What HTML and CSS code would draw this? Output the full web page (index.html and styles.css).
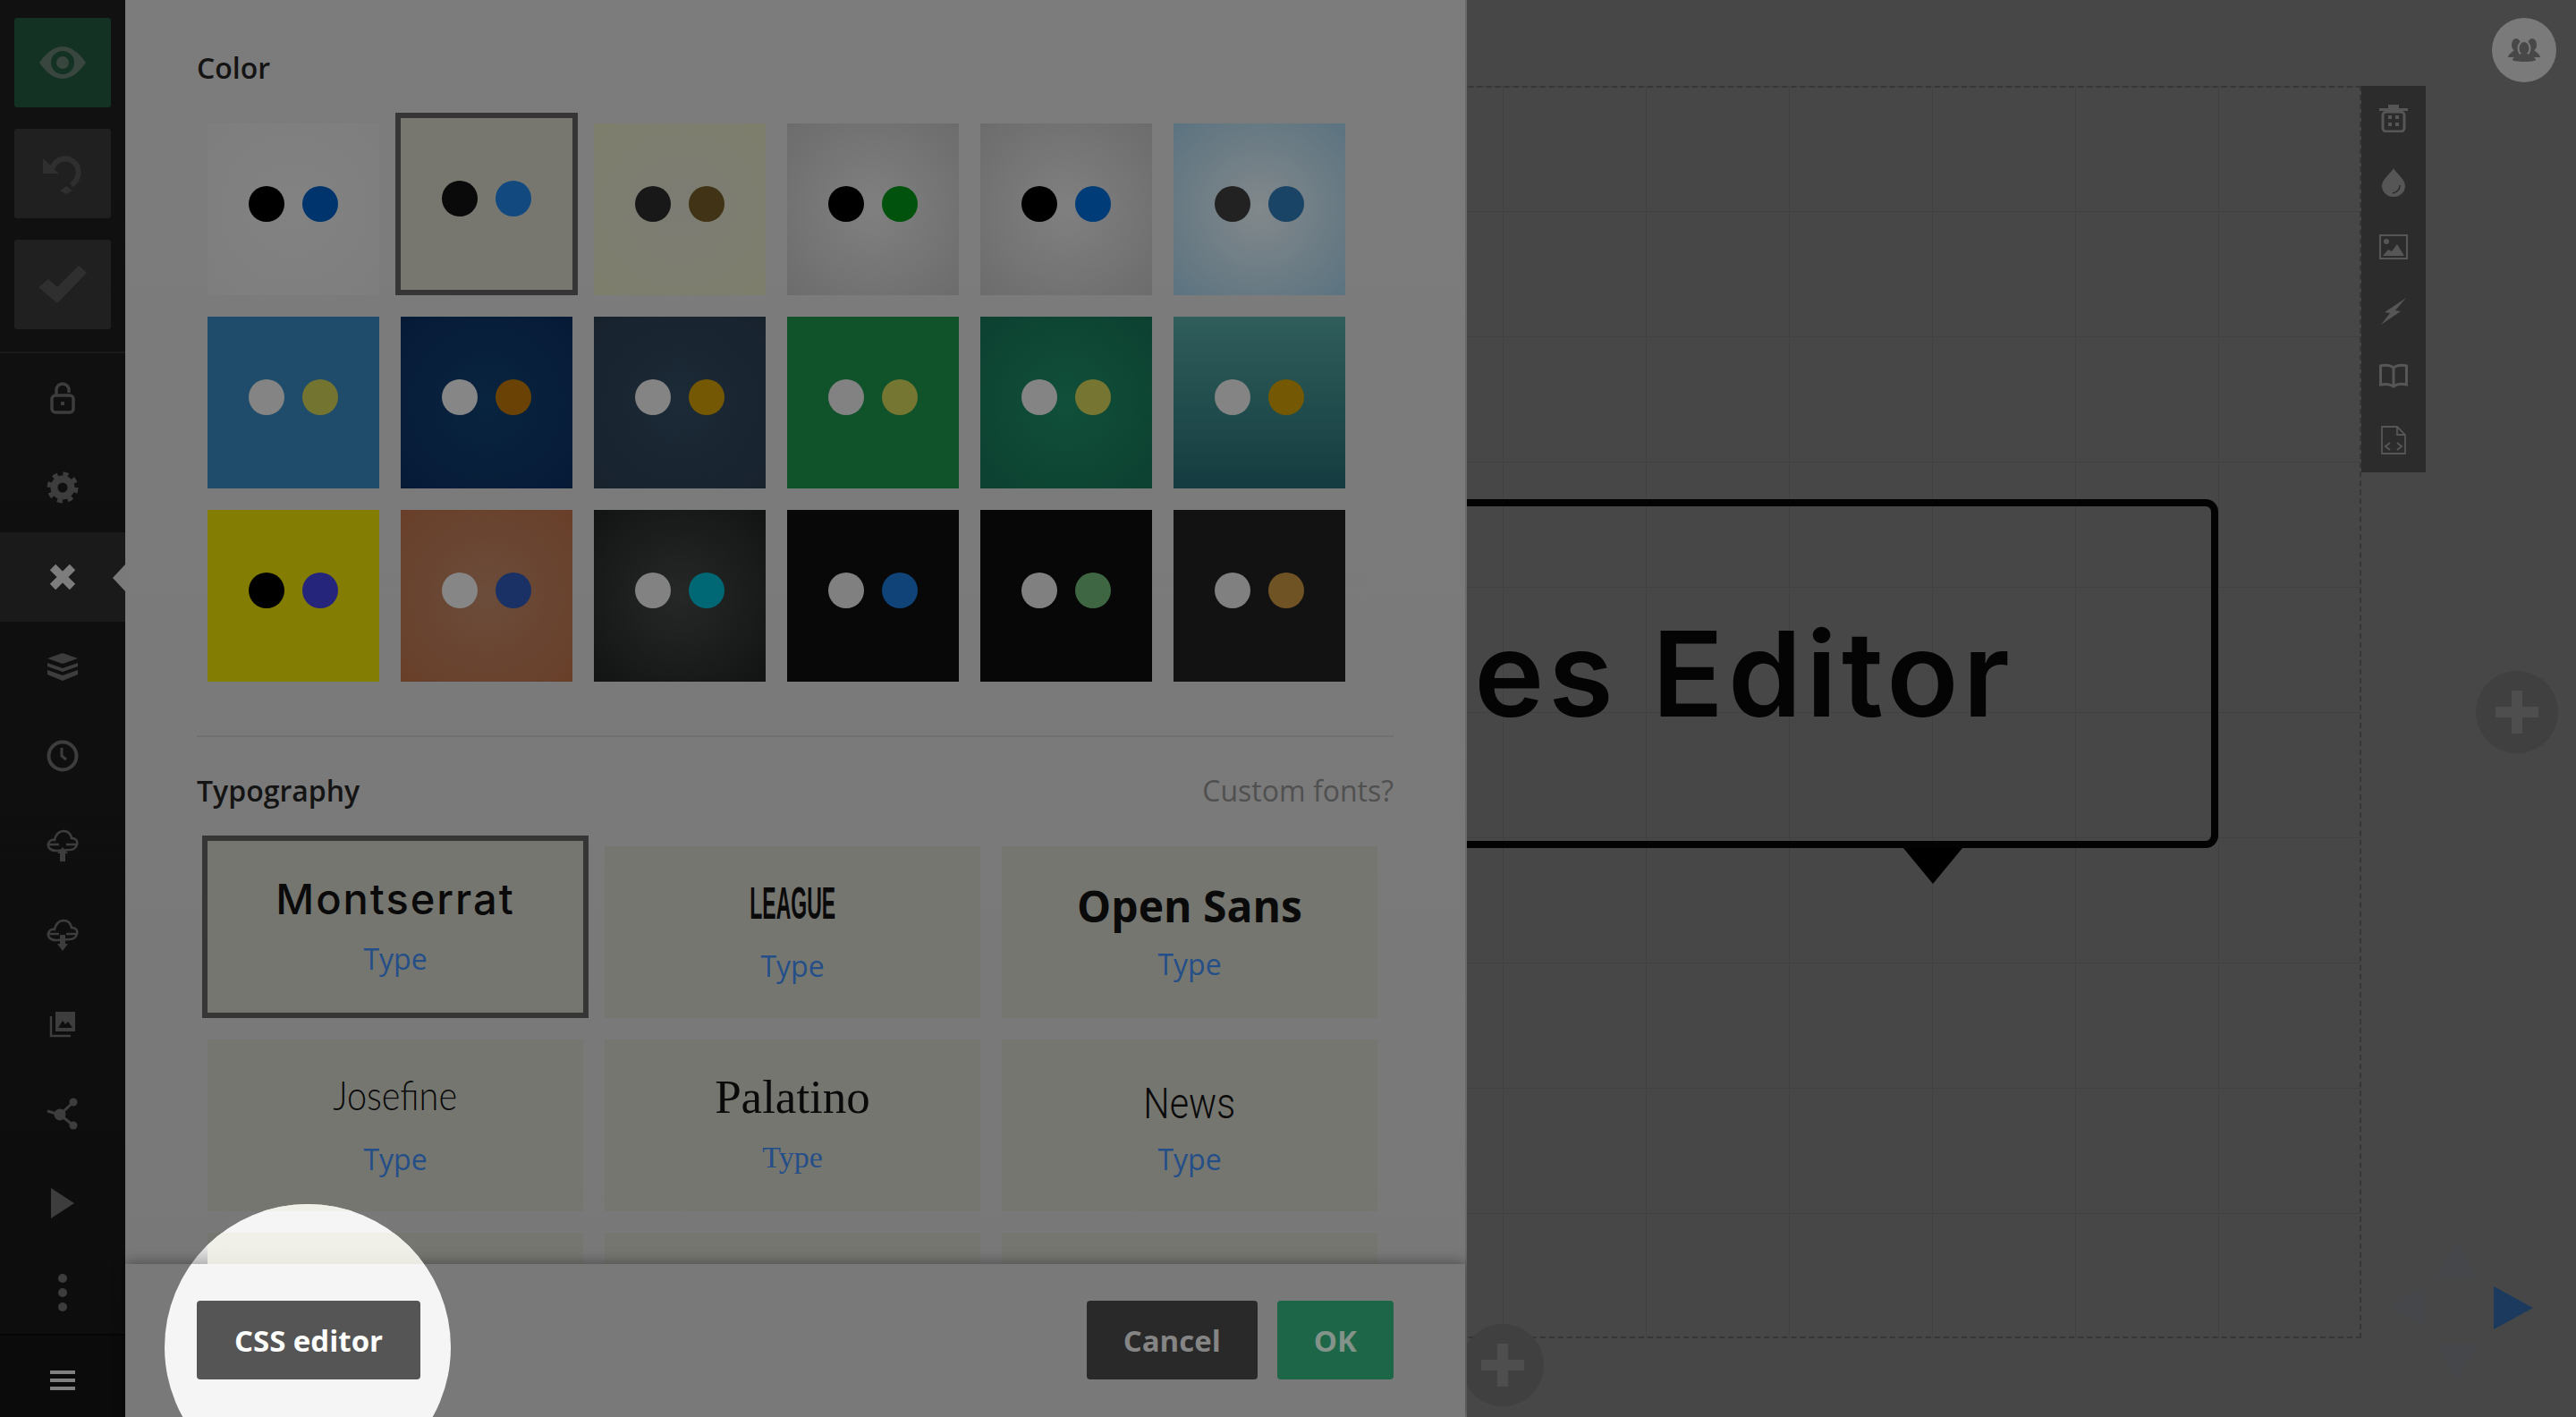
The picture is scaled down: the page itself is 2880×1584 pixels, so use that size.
FILE: index.html
```html
<!DOCTYPE html>
<html lang="en">
<head>
    <meta charset="UTF-8">
    <title>Slides Editor</title>
    <link rel="stylesheet" href="styles.css">
</head>
<body>

<div class="app">

    <nav class="sidebar">
        <div class="primary-actions">
            <button class="action action-preview">
                <svg width="52" height="38" viewBox="0 0 52 38"><path class="ic" d="M0 19C9 6 18 1 26 1s17 5 26 18c-9 13-18 18-26 18S9 32 0 19z"/><circle cx="26" cy="19" r="13" fill="#133223"/><circle class="ic" cx="26" cy="19" r="7"/></svg>
            </button>
            <button class="action">
                <svg width="46" height="46" viewBox="0 0 46 46"><path class="ic-line" d="M11 18C15 6 27 4 34 9c9 6 9 19-1 27" stroke-width="6"/><path class="ic" d="M1 6v17h18z"/><path class="ic" d="M27 37l7 5-7 4-7-4z"/></svg>
            </button>
            <button class="action">
                <svg width="54" height="42" viewBox="0 0 54 42"><path class="ic" d="M0 24l11-9 10 9L45 0l9 8-33 34z"/></svg>
            </button>
        </div>

        <div class="side-list">
            <a class="side-row">
                <svg width="28" height="36" viewBox="0 0 28 36"><rect class="ic-line" x="2" y="15" width="24" height="19" rx="4" stroke-width="3.5"/><path class="ic-line" d="M7 14V9a7 7 0 0 1 14 0v3" stroke-width="3.5"/><rect class="ic" x="12" y="22" width="4" height="4"/></svg>
            </a>
            <a class="side-row">
                <svg width="36" height="36" viewBox="0 0 36 36"><circle class="ic-line" cx="18" cy="18" r="9.5" stroke-width="8"/><circle class="ic-line" cx="18" cy="18" r="15" stroke-width="5" stroke-dasharray="5.89 5.89"/></svg>
            </a>
            <a class="side-row side-row-active">
                <svg width="30" height="30" viewBox="0 0 30 30"><path d="M4 4l22 22M26 4L4 26" fill="none" stroke="#7d7d7d" stroke-width="9"/></svg>
            </a>
            <a class="side-row">
                <svg width="34" height="31" viewBox="0 0 34 31"><path class="ic" d="M17 0l17 6-17 6L0 6zM0 11l17 6 17-6v4l-17 6-17-6zM0 19l17 6 17-6v5l-17 7-17-7z"/></svg>
            </a>
            <a class="side-row">
                <svg width="36" height="36" viewBox="0 0 36 36"><circle class="ic-line" cx="18" cy="18" r="15.5" stroke-width="4"/><path class="ic-line" d="M17 9v9l5 4" stroke-width="3"/></svg>
            </a>
            <a class="side-row">
                <svg width="36" height="36" viewBox="0 0 36 36"><path class="ic-line" d="M11 24C4 24 1 20 2 16c1-3 4-5 7-4 1-6 5-10 10-10s8 3 9 8c5 0 7 3 6 7-1 4-4 6-8 6zM2 17h12M22 17h12" stroke-width="2.6"/><path class="ic" d="M18 20l6 7h-3v9h-6v-9h-3z"/></svg>
            </a>
            <a class="side-row">
                <svg width="36" height="36" viewBox="0 0 36 36"><path class="ic-line" d="M11 24C4 24 1 20 2 16c1-3 4-5 7-4 1-6 5-10 10-10s8 3 9 8c5 0 7 3 6 7-1 4-4 6-8 6zM2 17h12M22 17h12" stroke-width="2.6"/><path class="ic" d="M15 18h6v10h3l-6 8-6-8h3z"/></svg>
            </a>
            <a class="side-row">
                <svg width="30" height="30" viewBox="0 0 30 30"><path class="ic-line" d="M2 6v22h22" stroke-width="2.5"/><path class="ic" fill-rule="evenodd" d="M7 1h22v22H7zM10 19h16l-5-7-3 3-3-4z"/></svg>
            </a>
            <a class="side-row">
                <svg width="36" height="36" viewBox="0 0 36 36"><path class="ic-line" d="M1 15l14 4 15-14M15 19l15 12" stroke-width="3"/><circle class="ic" cx="15" cy="19" r="6.5"/><circle class="ic" cx="30" cy="5" r="4.5"/><circle class="ic" cx="30" cy="31" r="4.5"/></svg>
            </a>
            <a class="side-row">
                <svg width="26" height="34" viewBox="0 0 26 34"><path class="ic" d="M0 0l26 17L0 34z"/></svg>
            </a>
            <a class="side-row">
                <svg width="12" height="44" viewBox="0 0 12 44"><circle class="ic" cx="6" cy="6" r="5"/><circle class="ic" cx="6" cy="22" r="5"/><circle class="ic" cx="6" cy="38" r="5"/></svg>
            </a>
        </div>

        <div class="side-footer">
            <svg width="28" height="22" viewBox="0 0 28 22"><path d="M0 0h28v4H0zM0 9h28v4H0zM0 18h28v4H0z" fill="#808080"/></svg>
        </div>
    </nav>

    <section class="panel">
        <div class="panel-scroll">
            <h2 class="section-label">Color</h2>
            <div class="swatches">
                <div class="swatch s1"><i></i><i></i></div>
                <div class="swatch s2 selected"><i></i><i></i></div>
                <div class="swatch s3"><i></i><i></i></div>
                <div class="swatch s4"><i></i><i></i></div>
                <div class="swatch s5"><i></i><i></i></div>
                <div class="swatch s6"><i></i><i></i></div>
                <div class="swatch s7"><i></i><i></i></div>
                <div class="swatch s8"><i></i><i></i></div>
                <div class="swatch s9"><i></i><i></i></div>
                <div class="swatch s10"><i></i><i></i></div>
                <div class="swatch s11"><i></i><i></i></div>
                <div class="swatch s12"><i></i><i></i></div>
                <div class="swatch s13"><i></i><i></i></div>
                <div class="swatch s14"><i></i><i></i></div>
                <div class="swatch s15"><i></i><i></i></div>
                <div class="swatch s16"><i></i><i></i></div>
                <div class="swatch s17"><i></i><i></i></div>
                <div class="swatch s18"><i></i><i></i></div>
            </div>

            <hr class="divider">

            <div class="type-head">
                <h2 class="section-label">Typography</h2>
                <a class="custom-link">Custom fonts?</a>
            </div>
            <div class="fonts">
                <div class="font-tile font-montserrat selected"><span class="font-name">Montserrat</span><span class="font-type">Type</span></div>
                <div class="font-tile font-league"><span class="font-name">LEAGUE</span><span class="font-type">Type</span></div>
                <div class="font-tile font-opensans"><span class="font-name">Open Sans</span><span class="font-type">Type</span></div>
                <div class="font-tile font-josefine"><span class="font-name">Josefine</span><span class="font-type">Type</span></div>
                <div class="font-tile font-palatino"><span class="font-name">Palatino</span><span class="font-type">Type</span></div>
                <div class="font-tile font-news"><span class="font-name">News</span><span class="font-type">Type</span></div>
                <div class="font-tile"></div>
                <div class="font-tile"></div>
                <div class="font-tile"></div>
            </div>
        </div>

        <div class="panel-footer">
            <button class="btn btn-cancel">Cancel</button>
            <button class="btn btn-ok">OK</button>
        </div>

        <!-- highlight around the css button -->
        <div class="spotlight">
            <div class="spot-top"><div class="spot-tile"></div></div>
            <button class="btn btn-css">CSS editor</button>
        </div>
    </section>

    <main class="canvas">
        <div class="slide">
            <div class="callout">
                <span class="callout-text">es Editor</span>
                <i class="callout-tail"></i>
            </div>
        </div>

        <div class="slide-tools">
            <a class="tool">
                <svg width="32" height="32" viewBox="0 0 32 32"><path class="tool-ic" d="M0 5h10V1h12v4h10v3H0z"/><rect class="tool-line" x="4" y="9" width="24" height="22" rx="4" stroke-width="3"/><path class="tool-ic" d="M10 13h4v4h-4zM18 13h4v4h-4zM10 21h4v4h-4zM18 21h4v4h-4z"/></svg>
            </a>
            <a class="tool">
                <svg width="26" height="32" viewBox="0 0 26 32"><path class="tool-ic" d="M13 0c3 6 13 12 13 20a13 12 0 0 1-26 0C0 12 10 6 13 0z"/><path d="M20 19c0 5-3 8-8 9" fill="none" stroke="#2c2c2c" stroke-width="1.5"/></svg>
            </a>
            <a class="tool">
                <svg width="32" height="28" viewBox="0 0 32 28"><rect class="tool-line" x="1" y="1" width="30" height="26" stroke-width="2"/><circle class="tool-ic" cx="8" cy="8" r="3"/><path class="tool-ic" d="M4 24l6-7 4 2 6-8 8 13z"/></svg>
            </a>
            <a class="tool">
                <svg width="30" height="30" viewBox="0 0 30 30"><path class="tool-ic" d="M29 0L17 14l6 1L1 30l10-13-6-1z"/></svg>
            </a>
            <a class="tool">
                <svg width="32" height="28" viewBox="0 0 32 28"><path class="tool-line" d="M16 5C12 2 6 2 1.500 3v21c5-1 10.500-1 14.500 2 4-3 10-3 14.500-2V3C26 2 20 2 16 5zM16 5v21" stroke-width="3"/></svg>
            </a>
            <a class="tool">
                <svg width="28" height="32" viewBox="0 0 28 32"><path class="tool-line" d="M1 1h17l9 9v21H1zM18 1v9h9" stroke-width="1.8"/><path class="tool-line" d="M10 19l-5 4 5 4M18 19l5 4-5 4" stroke-width="2"/></svg>
            </a>
        </div>

        <div class="presence">
            <svg width="38" height="26" viewBox="0 0 38 26"><g fill="#484848"><ellipse cx="10" cy="7" rx="5" ry="7"/><path d="M8 13h4l3 8H1c0-3 4-5 7-8z"/><ellipse cx="28" cy="7" rx="5" ry="7"/><path d="M26 13h4c3 3 7 5 7 8H23z"/></g><ellipse cx="19" cy="11" rx="6.500" ry="8" fill="#484848" stroke="#7a7a7a" stroke-width="2"/><path d="M15 17h8l2 2c4 1 7 3 7 5 0 1-6 2-13 2S6 25 6 24c0-2 3-4 7-5z" fill="#484848"/></svg>
        </div>

        <div class="add-btn add-right"><svg width="48" height="48" viewBox="0 0 48 48"><path class="plus" d="M18 0h12v18h18v12H30v18H18V30H0V18h18z"/></svg></div>
        <div class="add-btn add-bottom"><svg width="48" height="48" viewBox="0 0 48 48"><path class="plus" d="M18 0h12v18h18v12H30v18H18V30H0V18h18z"/></svg></div>

        <svg class="nav-arrow nav-right" width="44" height="48" viewBox="0 0 44 48"><path d="M0 0l44 24L0 48z"/></svg>
        <svg class="nav-arrow nav-left" width="38" height="44" viewBox="0 0 38 44"><path d="M38 0L0 22l38 22z"/></svg>
        <svg class="nav-arrow nav-up" width="48" height="40" viewBox="0 0 48 40"><path d="M24 0l24 40H0z"/></svg>
        <svg class="nav-arrow nav-down" width="48" height="40" viewBox="0 0 48 40"><path d="M0 0h48L24 40z"/></svg>
    </main>

</div>

</body>
</html>
```

FILE: styles.css
```css
* {
    box-sizing: border-box;
}

body {
    margin: 0;
    overflow: hidden;
    background-color: #474747;
    font-family: "Open Sans", sans-serif;
}

.app {
    display: flex;
    width: 2880px;
    height: 1584px;
    overflow: hidden;
}

.ic {
    fill: #3d3d3d;
}

.ic-line {
    fill: none;
    stroke: #3d3d3d;
}

/* sidebar */
.sidebar {
    display: flex;
    flex-direction: column;
    flex: none;
    width: 140px;
    height: 100%;
    background: linear-gradient(#111, #0d0d0d);
}

.primary-actions {
    display: flex;
    flex-direction: column;
    gap: 24px;
    padding: 20px 16px 25px;
    border-bottom: 2px solid #1a1a1a;
}

.action {
    display: flex;
    align-items: center;
    justify-content: center;
    height: 100px;
    padding: 0;
    border: none;
    border-radius: 3px;
    background-color: #202020;
}

.action .ic {
    fill: #2f2f2f;
}

.action .ic-line {
    stroke: #2f2f2f;
}

.action-preview {
    background-color: #133223;
}

.action-preview .ic {
    fill: #38463f;
}

.side-list {
    flex: 1;
    overflow: hidden;
}

.side-row {
    position: relative;
    display: flex;
    align-items: center;
    justify-content: center;
    height: 100px;
}

.side-row-active {
    background-color: #1a1a1a;
}

.side-row-active::after {
    content: "";
    position: absolute;
    right: 0;
    top: 36px;
    border-style: solid;
    border-width: 15px 14px 15px 0;
    border-color: transparent #7a7a7a transparent transparent;
}

.side-footer {
    display: flex;
    align-items: center;
    justify-content: center;
    flex: none;
    height: 93px;
    padding-top: 9px;
    border-top: 2px solid #060606;
    background-color: #0b0b0b;
}

/* theme panel */
.panel {
    position: relative;
    display: flex;
    flex-direction: column;
    flex: none;
    width: 1500px;
    height: 100%;
    border-right: 2px solid #6a6a6a;
    background: linear-gradient(#7c7c7c, #787878);
}

.panel-scroll {
    flex: 1;
    overflow: hidden;
    padding: 54px 80px 0;
}

.section-label {
    margin: 0 0 40px;
    font-size: 32px;
    font-weight: 600;
    line-height: 44px;
    color: #141414;
}

.swatches {
    display: grid;
    grid-template-columns: repeat(6, 192px);
    grid-auto-rows: 192px;
    gap: 24px;
    padding-left: 12px;
}

.swatch {
    display: flex;
    align-items: center;
    justify-content: center;
    gap: 20px;
    padding-bottom: 12px;
}

.swatch i {
    width: 40px;
    height: 40px;
    border-radius: 50%;
    background-color: var(--dot-a);
}

.swatch i + i {
    background-color: var(--dot-b);
}

.selected {
    transform: translateY(-6px);
    box-shadow: 0 0 0 6px #363636;
}

.s1 { background: radial-gradient(#828282, #7e7e7e); --dot-a: #000; --dot-b: #00346c; }
.s2 { background: #77776f; --dot-a: #0a0a0a; --dot-b: #124a80; }
.s3 { background: radial-gradient(#7c7c74, #7e7e6c); --dot-a: #181818; --dot-b: #403316; }
.s4 { background: radial-gradient(#808080, #6c6c6c); --dot-a: #000; --dot-b: #00520c; }
.s5 { background: radial-gradient(#808080, #6c6c6c); --dot-a: #000; --dot-b: #003c78; }
.s6 { background: radial-gradient(#82888b, #5b7380); --dot-a: #222; --dot-b: #1a4466; }
.s7 { background: #1e4c6a; --dot-a: #848484; --dot-b: #747431; }
.s8 { background: radial-gradient(#09243f, #061a36); --dot-a: #868686; --dot-b: #6a4205; }
.s9 { background: radial-gradient(#1c2a37, #17222d); --dot-a: #848484; --dot-b: #745803; }
.s10 { background: #10522a; --dot-a: #828282; --dot-b: #747631; }
.s11 { background: radial-gradient(#11503a, #0c4030); --dot-a: #848484; --dot-b: #767632; }
.s12 { background: linear-gradient(#305e5b, #143c40); --dot-a: #848484; --dot-b: #745803; }
.s13 { background: #837d04; --dot-a: #000; --dot-b: #25257c; }
.s14 { background: radial-gradient(#6b4c3a, #683f29); --dot-a: #868686; --dot-b: #193164; }
.s15 { background: radial-gradient(#262828, #121414); --dot-a: #828282; --dot-b: #006874; }
.s16 { background: #080808; --dot-a: #808080; --dot-b: #104378; }
.s17 { background: #070707; --dot-a: #808080; --dot-b: #3e6643; }
.s18 { background: #121212; --dot-a: #808080; --dot-b: #705324; }

.divider {
    height: 2px;
    margin: 60px 0 0;
    border: none;
    background-color: #707070;
}

.type-head {
    display: flex;
    align-items: center;
    justify-content: space-between;
    margin: 38px 0 40px;
}

.type-head .section-label {
    margin: 0;
}

.custom-link {
    font-size: 32px;
    line-height: 44px;
    color: #505050;
}

.fonts {
    display: grid;
    grid-template-columns: repeat(3, 420px);
    grid-auto-rows: 192px;
    gap: 24px;
    padding-left: 12px;
}

.font-tile {
    display: flex;
    flex-direction: column;
    align-items: center;
    background-color: #767671;
    color: #0a0a0a;
    white-space: nowrap;
}

.font-name {
    height: 60px;
    margin-top: 32px;
    line-height: 60px;
}

.font-type {
    margin-top: 20px;
    font-size: 32px;
    line-height: 44px;
    color: #244e88;
}

.font-montserrat .font-name {
    margin-top: 35px;
    font-family: Inter, sans-serif;
    font-size: 47px;
    font-weight: 500;
    letter-spacing: 2px;
}

.font-montserrat .font-type {
    margin-top: 15px;
}

.font-league .font-name {
    margin-top: 34px;
    font-family: "Liberation Sans", sans-serif;
    font-size: 50px;
    font-weight: 700;
    transform: scaleX(0.46);
}

.font-league .font-type {
    margin-top: 18px;
}

.font-opensans .font-name {
    margin-top: 37px;
    font-size: 48px;
    font-weight: 700;
}

.font-opensans .font-type {
    margin-top: 13px;
}

.font-josefine .font-name {
    font-family: Lato, sans-serif;
    font-size: 46px;
    font-weight: 300;
    transform: scaleX(0.86);
}

.font-palatino .font-name {
    margin-top: 34px;
    font-family: "Liberation Serif", serif;
    font-size: 53px;
}

.font-palatino .font-type {
    font-family: "Liberation Serif", serif;
    font-size: 34px;
    margin-top: 16px;
}

.font-news .font-name {
    margin-top: 42px;
    font-family: Roboto, sans-serif;
    font-size: 48px;
    font-weight: 300;
    transform: scaleX(0.86);
}

.font-news .font-type {
    margin-top: 10px;
}

.panel-footer {
    position: relative;
    display: flex;
    justify-content: flex-end;
    flex: none;
    gap: 22px;
    height: 171px;
    padding: 41px 80px;
    background-color: #797979;
    box-shadow: 0 -2px 14px rgba(0, 0, 0, 0.35);
}

.btn {
    height: 88px;
    padding: 0 41px;
    border: none;
    border-radius: 4px;
    font-family: "Open Sans", sans-serif;
    font-size: 33px;
    font-weight: 700;
}

.btn-cancel {
    background-color: #292929;
    color: #858585;
}

.btn-ok {
    background-color: #1d6647;
    color: #83938a;
}

/* cut-out circle over the dimmed panel */
.spotlight {
    position: absolute;
    left: 44px;
    top: 1346px;
    width: 320px;
    height: 320px;
    overflow: hidden;
    border-radius: 50%;
    background-color: #f5f5f5;
}

.spot-top {
    height: 67px;
    padding-left: 48px;
    background: linear-gradient(transparent 65%, rgba(0, 0, 0, 0.25));
}

.spot-tile {
    height: 100%;
    background: linear-gradient(#f0f0e8 0 8px, transparent 8px 32px, #f0f0e8 32px);
    opacity: 0.9;
}

.btn-css {
    display: block;
    width: 250px;
    margin: 41px 0 0 36px;
    padding: 0;
    background-color: #555;
    color: #fff;
}

/* canvas */
.canvas {
    position: relative;
    flex: 1;
    height: 100%;
    overflow: hidden;
    background-color: #474747;
}

.slide {
    position: absolute;
    left: -600px;
    top: 96px;
    width: 1600px;
    height: 1400px;
    border: 2px dashed #363636;
    background-image:
        linear-gradient(#414141 1px, transparent 1px),
        linear-gradient(90deg, #414141 1px, transparent 1px);
    background-size: 160px 140px;
    background-origin: border-box;
}

.callout {
    position: absolute;
    left: 160px;
    top: 460px;
    display: flex;
    align-items: center;
    justify-content: flex-end;
    width: 1278px;
    height: 390px;
    padding-right: 220px;
    border: 8px solid #030303;
    border-radius: 14px;
}

.callout-text {
    font-family: Inter, sans-serif;
    font-size: 132px;
    font-weight: 600;
    letter-spacing: 5px;
    white-space: nowrap;
    color: #040404;
}

.callout-tail {
    position: absolute;
    left: 918px;
    top: 382px;
    border-style: solid;
    border-width: 40px 33px 0;
    border-color: #000 transparent transparent;
}

.slide-tools {
    position: absolute;
    left: 1000px;
    top: 96px;
    display: flex;
    flex-direction: column;
    width: 72px;
    background-color: #2c2c2c;
}

.tool {
    display: flex;
    align-items: center;
    justify-content: center;
    height: 72px;
}

.tool-ic {
    fill: #565656;
}

.tool-line {
    fill: none;
    stroke: #565656;
}

.presence {
    position: absolute;
    left: 1146px;
    top: 20px;
    display: flex;
    align-items: center;
    justify-content: center;
    width: 72px;
    height: 72px;
    border-radius: 50%;
    background-color: #7a7a7a;
}

.add-btn {
    position: absolute;
    display: flex;
    align-items: center;
    justify-content: center;
    width: 92px;
    height: 92px;
    border-radius: 50%;
    background-color: #404040;
}

.plus {
    fill: #4e4e4e;
}

.add-right {
    left: 1128px;
    top: 750px;
}

.add-bottom {
    left: -6px;
    top: 1480px;
}

.nav-arrow {
    position: absolute;
    fill: #45474a;
}

.nav-right {
    left: 1148px;
    top: 1438px;
    fill: #1c3a5e;
}

.nav-left {
    left: 1032px;
    top: 1439px;
}

.nav-up {
    left: 1083px;
    top: 1388px;
}

.nav-down {
    left: 1083px;
    top: 1502px;
}
```
